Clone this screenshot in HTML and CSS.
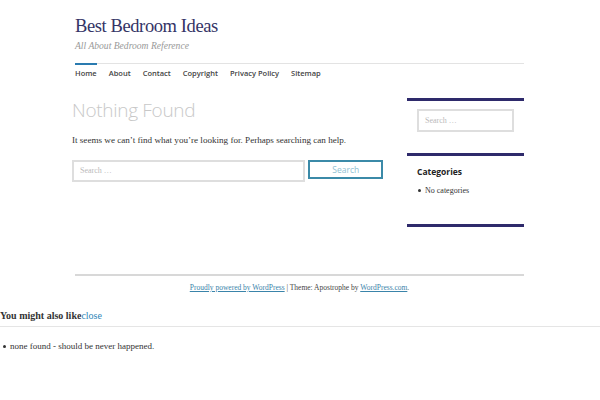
FILE: index.html
```html
<!DOCTYPE html>
<html>
<head>
<meta charset="utf-8">
<link rel="stylesheet" href="styles.css">
</head>
<body>
<div class="page">
  <header class="site-header">
    <div class="site-title">Best Bedroom Ideas</div>
    <div class="site-desc">All About Bedroom Reference</div>
    <nav class="nav">
      <a class="nav-item active">Home</a>
      <a class="nav-item">About</a>
      <a class="nav-item">Contact</a>
      <a class="nav-item">Copyright</a>
      <a class="nav-item">Privacy Policy</a>
      <a class="nav-item">Sitemap</a>
    </nav>
  </header>
  <div class="main">
    <section class="content">
      <h1 class="page-title">Nothing Found</h1>
      <p class="lead">It seems we can’t find what you’re looking for. Perhaps searching can help.</p>
      <form class="search-form">
        <div class="search-field">Search …</div>
        <div class="search-btn">Search</div>
      </form>
    </section>
    <aside class="sidebar">
      <div class="widget widget-search">
        <div class="side-field">Search …</div>
      </div>
      <div class="widget widget-cats">
        <div class="widget-title">Categories</div>
        <ul class="cat-list"><li>No categories</li></ul>
      </div>
      <div class="widget-end"></div>
    </aside>
  </div>
  <footer class="footer">
    <a class="flink">Proudly powered by WordPress</a> | Theme: Apostrophe by <a class="flink">WordPress.com</a>.
  </footer>
</div>
<div class="related">
  <div class="related-head"><b>You might also like</b><a class="close">close</a></div>
  <ul class="related-list"><li>none found - should be never happened.</li></ul>
</div>
</body>
</html>
```
FILE: styles.css
```css
html, body { margin: 0; padding: 0; background: #fff; }
body { font-family: "Liberation Serif", "DejaVu Serif", serif; color: #333; width: 600px; }
.page { padding-left: 72px; width: 452px; }
.site-header { padding-left: 3px; }
.site-title { padding-top: 14px; font-size: 18.5px; line-height: 24px; color: #343466; letter-spacing: -0.4px; }
.site-desc { margin-top: 1px; font-style: italic; font-size: 9.6px; line-height: 14px; color: #999; }
.nav { margin-top: 10px; border-top: 1px solid #e3e3e3; display: flex; gap: 12px; height: 26px; }
.nav-item { font-family: "Open Sans", sans-serif; font-weight: 600; font-size: 7.5px; color: #444; padding-top: 2px; margin-top: -1px; border-top: 2px solid transparent; line-height: 12px; }
.nav-item.active { border-top: 2px solid #2a7bb0; }
.main { display: flex; gap: 24px; margin-top: 10px; }
.content { width: 311px; }
.page-title { margin: -2px 0 0; font-family: "Open Sans", sans-serif; font-weight: 300; font-size: 19px; line-height: 24px; color: #c8c8c8; letter-spacing: -0.3px; }
.lead { margin: 11px 0 0; font-size: 9.1px; line-height: 14px; color: #333; }
.search-form { display: flex; gap: 3px; margin-top: 13px; }
.search-field { height: 18px; border: 2px solid #dedede; font-size: 8px; color: #bbb; padding-left: 6px; line-height: 18px; width: 225px; }
.search-btn { width: 71px; height: 15px; border: 2px solid #3b8aa8; color: #8fbfd3; font-family: "Open Sans", sans-serif; font-size: 8.5px; text-align: center; line-height: 15px; }
.sidebar { width: 117px; margin-top: -2px; }
.widget { border-top: 3px solid #2e2a6b; }
.widget-search { padding: 8px 10px 21px; }
.side-field { height: 19px; border: 2px solid #dedede; font-size: 8px; color: #bbb; padding-left: 6px; line-height: 19px; }
.widget-cats { padding: 10px 10px 0; height: 58px; }
.widget-title { font-family: "Open Sans", sans-serif; font-weight: 700; font-size: 8.5px; color: #222; line-height: 12px; }
.cat-list { margin: 7px 0 0; padding: 0; list-style: none; font-size: 8px; line-height: 12px; color: #333; }
.cat-list li::before, .related-list li::before { content: ""; display: inline-block; width: 3px; height: 3px; border-radius: 50%; background: #333; vertical-align: middle; margin: 0 4px 1px 1px; }
.widget-end { border-top: 3px solid #2e2a6b; }
.footer { margin: 47px 0 0 3px; border-top: 2px solid #d8d8d8; text-align: center; font-size: 7.5px; color: #444; padding-top: 6px; line-height: 12px; }
.flink { color: #3a84aa; text-decoration: underline; }
.related { margin-top: 15px; }
.related-head { font-size: 10px; line-height: 14px; color: #333; padding-bottom: 3px; border-bottom: 1px solid #e5e5e5; }
.close { color: #2f86b8; font-weight: normal; }
.related-list { margin: 13px 0 0; padding: 0 0 0 2px; list-style: none; font-size: 9px; line-height: 13px; }
```
